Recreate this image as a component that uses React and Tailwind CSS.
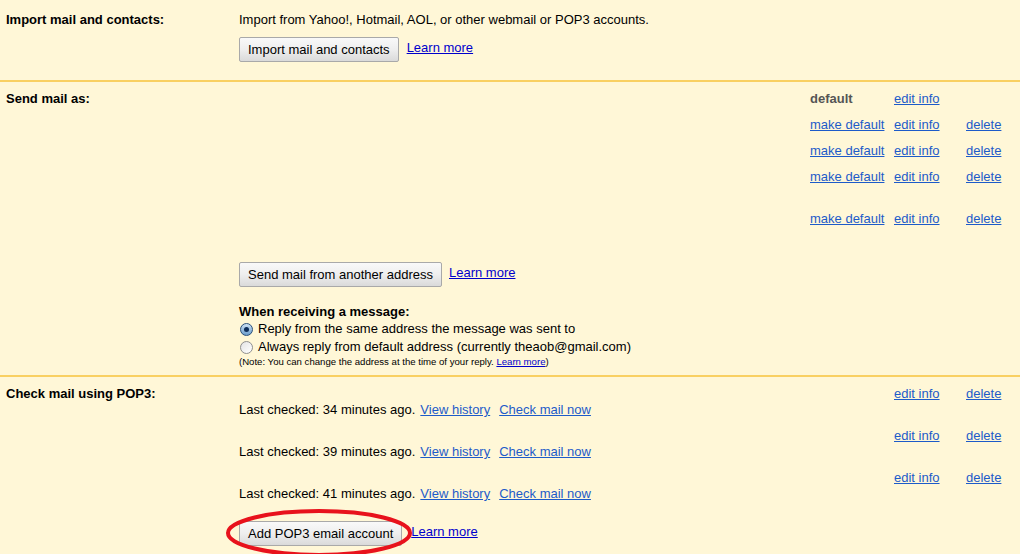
import clsx from 'clsx'

const linkCls = 'text-[#1d5bc9] underline underline-offset-[1px]'
const learnCls = 'text-[#0000cc] underline underline-offset-[1px]'

function Section({ label, className, last, children }) {
  return (
    <div className={clsx('flex', !last && 'border-b-2 border-[#f9d062]', className)}>
      <div className="w-[239px] shrink-0 pl-[6px] font-bold leading-4">{label}</div>
      <div className="flex-1">{children}</div>
    </div>
  )
}

function Button({ children }) {
  return (
    <button className="h-[25px] rounded-[2px] border border-[#a9a9a9] bg-gradient-to-b from-[#f9f9f9] via-[#eeeeee] to-[#dadada] px-[8px] text-[13px] leading-4 text-black">
      {children}
    </button>
  )
}

function Radio({ checked }) {
  return (
    <span
      className={clsx(
        'ml-[1px] mr-[5px] inline-flex h-[13px] w-[13px] items-center justify-center rounded-full border',
        checked ? 'border-[#2a4f7a] bg-gradient-to-b from-[#cfe3f4] to-[#6a9ccc]' : 'border-[#8f8f8f] bg-gradient-to-br from-[#e4e4e4] to-[#ffffff]'
      )}
    >
      {checked && <span className="h-[5px] w-[5px] rounded-full bg-[#0d2d5a]" />}
    </span>
  )
}

const sendAs = [
  { isDefault: true },
  {},
  {},
  { tall: true },
  {},
]

const pop3 = [34, 39, 41]

export default function App() {
  return (
    <div className="min-h-screen bg-[#fff7d7] font-['Liberation_Sans',Arial,sans-serif] text-[13px] text-black">
      <Section label="Import mail and contacts:" className="h-[82px] pt-[12px]">
        <div className="leading-4">Import from Yahoo!, Hotmail, AOL, or other webmail or POP3 accounts.</div>
        <div className="mt-[9px] flex items-center gap-[8px]">
          <Button>Import mail and contacts</Button>
          <a className={clsx(learnCls, 'mb-[3px]')}>Learn more</a>
        </div>
      </Section>

      <Section label="Send mail as:" className="pt-[9px] pb-[7px]">
        <div className="grid grid-cols-[1fr_84px_72px_54px] leading-4">
          {sendAs.map((row, i) => (
            <div key={i} className={clsx('col-span-4 grid grid-cols-subgrid', row.tall ? 'pb-[26px]' : 'pb-[10px]')}>
              <div />
              <div>
                {row.isDefault ? (
                  <span className="font-bold text-[#555]">default</span>
                ) : (
                  <a className={linkCls}>make default</a>
                )}
              </div>
              <div>
                <a className={linkCls}>edit info</a>
              </div>
              <div>{!row.isDefault && <a className={linkCls}>delete</a>}</div>
            </div>
          ))}
        </div>
        <div className="mt-[25px] flex items-center gap-[7px]">
          <Button>Send mail from another address</Button>
          <a className={clsx(learnCls, 'mb-[3px]')}>Learn more</a>
        </div>
        <div className="mt-[17px] font-bold leading-4">When receiving a message:</div>
        <div className="flex items-center leading-[18px]">
          <Radio checked />
          Reply from the same address the message was sent to
        </div>
        <div className="flex items-center leading-[18px]">
          <Radio />
          Always reply from default address (currently theaob@gmail.com)
        </div>
        <div className="text-[9.6px] leading-[12px]">
          (Note: You can change the address at the time of your reply. <a className={learnCls}>Learn more</a>)
        </div>
      </Section>

      <Section label="Check mail using POP3:" last className="pt-[9px]">
        <div className="grid grid-cols-[1fr_84px_72px_54px] leading-4">
          {pop3.map((mins) => (
            <div key={mins} className="col-span-4 grid grid-cols-subgrid pb-[10px]">
              <div>
                <div className="h-4" />
                <div>
                  Last checked: {mins} minutes ago.
                  <a className={clsx(linkCls, 'ml-[5px]')}>View history</a>
                  <a className={clsx(linkCls, 'ml-[9px]')}>Check mail now</a>
                </div>
              </div>
              <div />
              <div>
                <a className={linkCls}>edit info</a>
              </div>
              <div>
                <a className={linkCls}>delete</a>
              </div>
            </div>
          ))}
        </div>
        <div className="relative mt-[9px] flex items-center gap-[9px]">
          <Button>Add POP3 email account</Button>
          <a className={clsx(learnCls, 'mb-[3px]')}>Learn more</a>
          <svg className="pointer-events-none absolute left-[-14px] top-[-13px]" width="192" height="50" viewBox="0 0 192 50">
            <ellipse cx="94" cy="25" rx="91" ry="22" fill="none" stroke="#e8121c" strokeWidth="4" />
          </svg>
        </div>
      </Section>
    </div>
  )
}
